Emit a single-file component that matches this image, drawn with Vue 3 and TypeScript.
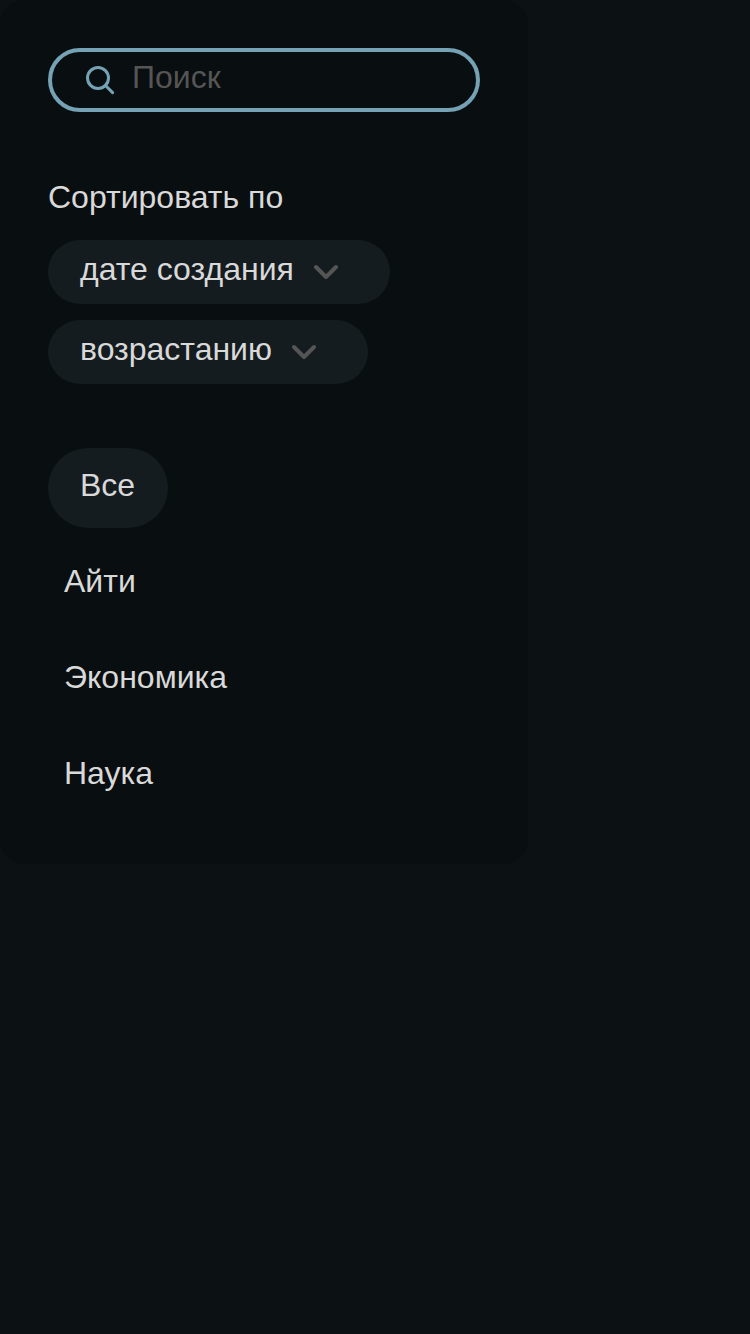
<script setup lang="ts">
import { ref } from 'vue'

const sorts: string[] = ['дате создания', 'возрастанию']
const categories: string[] = ['Все', 'Айти', 'Экономика', 'Наука']
const active = ref<string>('Все')
const query = ref<string>('')
</script>

<template>
  <main class="page">
    <aside class="panel">
      <label class="search">
        <svg class="search-icon" viewBox="0 0 32 32" fill="none">
          <circle cx="14" cy="14" r="10.5" />
          <path d="M21.5 21.5L28.6 28.6" />
        </svg>
        <input v-model="query" type="text" placeholder="Поиск" />
      </label>
      <section class="sorting">
        <h2>Сортировать по</h2>
        <button v-for="s in sorts" :key="s" class="select" type="button">
          <span>{{ s }}</span>
          <svg class="chevron" viewBox="0 0 24 16" fill="none">
            <path d="M2 3L12 13L22 3" />
          </svg>
        </button>
      </section>
      <nav class="categories">
        <button
          v-for="c in categories"
          :key="c"
          type="button"
          class="category"
          :class="{ active: c === active }"
          @click="active = c"
        >{{ c }}</button>
      </nav>
    </aside>
  </main>
</template>

<style>
body {
  background: #0c1113;
}
</style>

<style scoped>
.page {
  height: 1334px;
  background: #0c1113;
  font-family: "Liberation Sans", Arial, sans-serif;
  font-size: 32px;
  line-height: 36px;
  color: #d9d9d9;
}
.panel {
  box-sizing: border-box;
  width: 528px;
  height: 864px;
  padding: 48px;
  border-radius: 24px;
  background: #090e10;
}
.search {
  box-sizing: border-box;
  display: flex;
  align-items: center;
  height: 64px;
  padding: 0 32px;
  border: 4px solid #75a3b5;
  border-radius: 32px;
}
.search-icon {
  flex: none;
  width: 32px;
  height: 32px;
  stroke: #75a3b5;
  stroke-width: 3;
  stroke-linecap: round;
}
input {
  width: 280px;
  height: 36px;
  margin: 0 0 6px 16px;
  padding: 0;
  border: 0;
  outline: 0;
  background: none;
  font: inherit;
  color: inherit;
}
input::placeholder {
  color: #555;
  opacity: 1;
}
.sorting {
  display: flex;
  flex-direction: column;
  align-items: flex-start;
  gap: 16px;
  margin-top: 67px;
}
h2 {
  margin: 0 0 9px;
  font: inherit;
}
button {
  border: 0;
  background: none;
  font: inherit;
  color: inherit;
  cursor: pointer;
}
.select {
  display: flex;
  align-items: center;
  height: 64px;
  padding: 0 52px 0 32px;
  border-radius: 32px;
  background: #151c1f;
}
.select span {
  margin-bottom: 6px;
}
.chevron {
  width: 24px;
  height: 16px;
  margin-left: 20px;
  stroke: #555;
  stroke-width: 4;
  stroke-linecap: round;
  stroke-linejoin: round;
}
.categories {
  display: flex;
  flex-direction: column;
  align-items: flex-start;
  gap: 16px;
  margin-top: 64px;
}
.category {
  height: 80px;
  padding: 0 16px 7px;
  border-radius: 40px;
}
.category.active {
  padding: 0 33px 7px 32px;
  background: #151c1f;
}
</style>
